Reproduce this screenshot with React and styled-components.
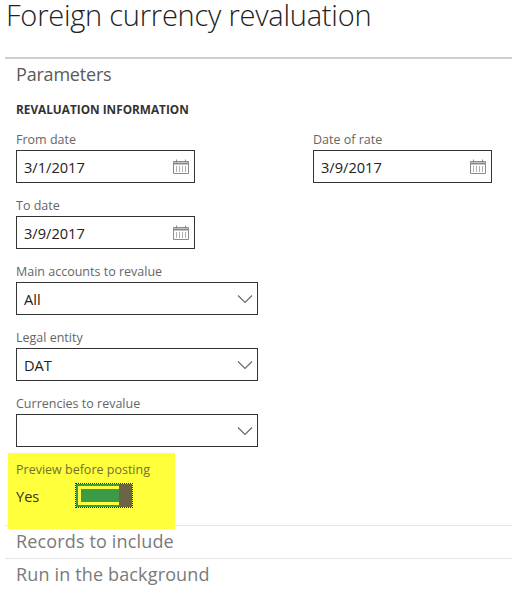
import React from "react";
import styled, { createGlobalStyle } from "styled-components";

const GlobalStyle = createGlobalStyle`
  html, body {
    margin: 0;
    padding: 0;
    background: #fff;
  }
  body {
    font-family: "Open Sans", "Noto Sans", "Liberation Sans", sans-serif;
  }
`;

const Page = styled.div`
  width: 512px;
  height: 606px;
  overflow: hidden;
  padding-left: 5px;
  box-sizing: border-box;
`;

const Title = styled.h1`
  margin: 0 0 0 1px;
  height: 57px;
  font-size: 29px;
  line-height: 30px;
  letter-spacing: -0.22px;
  font-weight: 300;
  color: #222;
`;

const Section = styled.section`
  border-top: ${(p) => (p.$strong ? "2px solid #cfcfcf" : "1px solid #e6e6e6")};
  padding-left: 11px;
`;

const SectionTitle = styled.h2`
  margin: 0;
  height: 32px;
  font-size: 18px;
  line-height: 30px;
  font-weight: 400;
  letter-spacing: ${(p) => (p.$muted ? "0.15px" : "-0.2px")};
  color: ${(p) => (p.$muted ? "#7a7a7a" : "#5a5a5a")};
`;

const GroupTitle = styled.h3`
  margin: 10px 0 16px;
  font-size: 11.8px;
  line-height: 16px;
  font-weight: 700;
  color: #333;
`;

const Columns = styled.div`
  display: grid;
  grid-template-columns: 297px 180px;
`;

const Stack = styled.div`
  display: flex;
  flex-direction: column;
  gap: 16px;
`;

const Field = styled.div`
  display: flex;
  flex-direction: column;
`;

const Label = styled.label`
  font-size: 12.5px;
  line-height: 14px;
  height: 17px;
  color: #666;
`;

const InputBox = styled.div`
  box-sizing: border-box;
  width: ${(p) => (p.$wide ? 242 : 179)}px;
  height: 33px;
  border: 1px solid #333;
  background: #fff;
  display: flex;
  align-items: center;
  padding: 1px ${(p) => (p.$wide ? 4 : 5)}px 0 7px;
  font-size: 14.6px;
  color: #222;
`;

const IconSlot = styled.span`
  margin-left: auto;
  display: flex;
  margin-top: -1px;
`;

const Highlight = styled.div`
  position: relative;
  z-index: 1;
  box-sizing: border-box;
  width: 167px;
  height: 76px;
  margin: 6px 0 -4px -8px;
  padding: 10px 0 0 8px;
  background: #ffff3c;
`;

const HighlightLabel = styled(Label)`
  display: block;
  color: #71712c;
`;

const ToggleRow = styled.div`
  display: flex;
  align-items: center;
  margin-top: 3px;
  height: 25px;
`;

const ToggleValue = styled.span`
  width: 59px;
  padding-top: 1px;
  font-size: 14.6px;
  color: #333;
`;

const Toggle = styled.div`
  box-sizing: border-box;
  width: 58px;
  height: 25px;
  border: 1px dotted #333;
`;

const ToggleTrack = styled.div`
  box-sizing: border-box;
  height: 100%;
  display: flex;
  border: 2px solid #3a9a45;
  border-right: 0;
`;

const ToggleFill = styled.div`
  flex: 1;
  background: #3a9a45;
  border: 3px solid #ffff3c;
  border-right: 0;
`;

const ToggleThumb = styled.div`
  width: 13px;
  margin: -2px 0;
  background: #6b6543;
`;

const CalendarIcon = () => (
  <svg width="16" height="15" viewBox="0 0 16 15" fill="none" stroke="#8a8a8a" strokeWidth="1">
    <path d="M.5 2.5h15v12H.5z" />
    <path d="M.5 4.5h15" strokeWidth="2" />
    <path d="M3.5 .5v3M12.5 .5v3" />
    <path d="M3.5 7v6M6.5 7v6M9.5 7v6M12.5 7v6" strokeOpacity=".7" />
  </svg>
);

const ChevronIcon = () => (
  <svg width="16" height="10" viewBox="0 0 16 10" fill="none" stroke="#666" strokeWidth="1.1">
    <path d="M1 1.5l7 7 7-7" />
  </svg>
);

const DateField = ({ label, value }) => (
  <Field>
    <Label>{label}</Label>
    <InputBox>
      {value}
      <IconSlot>
        <CalendarIcon />
      </IconSlot>
    </InputBox>
  </Field>
);

const SelectField = ({ label, value }) => (
  <Field>
    <Label>{label}</Label>
    <InputBox $wide>
      {value}
      <IconSlot>
        <ChevronIcon />
      </IconSlot>
    </InputBox>
  </Field>
);

export default function App() {
  return (
    <Page>
      <GlobalStyle />
      <Title>Foreign currency revaluation</Title>
      <Section $strong>
        <SectionTitle>Parameters</SectionTitle>
        <GroupTitle>REVALUATION INFORMATION</GroupTitle>
        <Columns>
          <Stack>
            <DateField label="From date" value="3/1/2017" />
            <DateField label="To date" value="3/9/2017" />
            <SelectField label="Main accounts to revalue" value="All" />
            <SelectField label="Legal entity" value="DAT" />
            <SelectField label="Currencies to revalue" value="" />
          </Stack>
          <DateField label="Date of rate" value="3/9/2017" />
        </Columns>
        <Highlight>
          <HighlightLabel>Preview before posting</HighlightLabel>
          <ToggleRow>
            <ToggleValue>Yes</ToggleValue>
            <Toggle>
              <ToggleTrack>
                <ToggleFill />
                <ToggleThumb />
              </ToggleTrack>
            </Toggle>
          </ToggleRow>
        </Highlight>
      </Section>
      <Section>
        <SectionTitle $muted>Records to include</SectionTitle>
      </Section>
      <Section>
        <SectionTitle $muted>Run in the background</SectionTitle>
      </Section>
    </Page>
  );
}
